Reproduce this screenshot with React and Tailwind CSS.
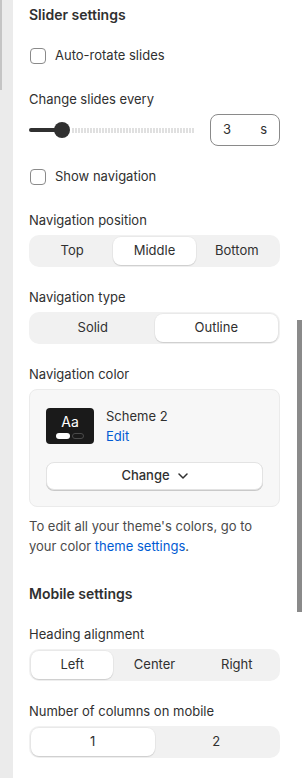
import clsx from 'clsx';

function Checkbox({ label }) {
  return (
    <div className="flex h-5 items-center gap-[9px]">
      <span className="h-4 w-4 rounded-[4px] border border-[#8a8a8a] bg-white" />
      <span className="text-[13px] text-[#303030]">{label}</span>
    </div>
  );
}

function Label({ children, className }) {
  return <div className={clsx("h-5 text-[13px] leading-5 text-[#303030]", className)}>{children}</div>;
}

function Segmented({ options, active }) {
  return (
    <div className="mt-[5px] flex h-8 rounded-[10px] bg-[#f1f1f1] p-[2px]">
      {options.map((o, i) => (
        <div
          key={o}
          className={clsx(
            "flex flex-1 items-center justify-center rounded-lg text-[13px] text-[#303030]",
            i === active && "bg-white shadow-[0_1px_1px_rgba(0,0,0,0.12),0_0_0_1px_rgba(0,0,0,0.03)]"
          )}
        >
          {o}
        </div>
      ))}
    </div>
  );
}

export default function App() {
  return (
    <div className="flex h-[778px] w-[302px] overflow-hidden bg-white font-[Inter,'Liberation_Sans',sans-serif] antialiased">
      {/* left rail */}
      <div className="w-[2px] bg-[#ebebeb]">
        <div className="h-[90px] bg-[#c4c4c4]" />
      </div>
      <div className="w-[11px] bg-[#ebebeb]" />

      {/* panel */}
      <div className="flex flex-1 flex-col pl-4 pr-[17px] pt-[5px]">
        <div className="h-5 text-[14px] font-semibold leading-5 text-[#303030]">Slider settings</div>

        <div className="mt-[21px] pl-px">
          <Checkbox label="Auto-rotate slides" />
        </div>

        <Label className="mt-[23px]">Change slides every</Label>
        <div className="mt-[5px] flex h-8 items-center">
          <div className="flex h-4 w-[165px] items-center">
            <div className="h-1 w-[29px] rounded-l-full bg-[#303030]" />
            <div className="-ml-1 h-4 w-4 shrink-0 rounded-full bg-[#303030]" />
            <div className="ml-[2px] h-[5px] flex-1 bg-[repeating-linear-gradient(90deg,#e0e0e0_0_2px,transparent_2px_3px)]" />
          </div>
          <div className="ml-auto flex h-8 w-[70px] items-center justify-between rounded-lg border border-[#8a8a8a] px-3 text-[13px] text-[#303030]">
            <span>3</span>
            <span>s</span>
          </div>
        </div>

        <div className="mt-[21px] pl-px">
          <Checkbox label="Show navigation" />
        </div>

        <Label className="mt-[23px]">Navigation position</Label>
        <Segmented options={['Top', 'Middle', 'Bottom']} active={1} />

        <Label className="mt-5">Navigation type</Label>
        <Segmented options={['Solid', 'Outline']} active={1} />

        <Label className="mt-5">Navigation color</Label>
        <div className="mt-[5px] rounded-lg border border-[#ebebeb] bg-[#f7f7f7] p-4">
          <div className="flex items-center gap-3">
            <div className="flex h-9 w-12 flex-col items-center justify-center rounded-[4px] bg-[#1a1a1a] pt-px">
              <span className="text-[14px] leading-4 text-white">Aa</span>
              <div className="mt-[3px] flex items-center gap-[2px]">
                <span className="h-[6px] w-[14px] rounded-full bg-white" />
                <span className="h-[6px] w-[12px] rounded-full border border-[#4a4a4a]" />
              </div>
            </div>
            <div className="flex flex-col text-[13px] leading-5">
              <span className="text-[#303030]">Scheme 2</span>
              <span className="text-[#005bd3]">Edit</span>
            </div>
          </div>
          <div className="mt-4 flex h-7 items-center justify-center gap-2 rounded-lg border border-[#e3e3e3] bg-white text-[13px] font-medium text-[#303030] shadow-[0_1px_0_#c9c9c9]">
            <span>Change</span>
            <svg width="10" height="6" viewBox="0 0 10 6" fill="none">
              <path d="M1 1l4 4 4-4" stroke="#303030" strokeWidth="1.5" strokeLinecap="round" strokeLinejoin="round" />
            </svg>
          </div>
        </div>

        <p className="mt-[9px] text-[13px] leading-5 text-[#4a4a4a]">
          To edit all your theme's colors, go to your color <span className="text-[#005bd3]">theme settings</span>.
        </p>

        <div className="mt-7 h-5 text-[14px] font-semibold leading-5 text-[#303030]">Mobile settings</div>

        <Label className="mt-5">Heading alignment</Label>
        <Segmented options={['Left', 'Center', 'Right']} active={0} />

        <Label className="mt-5">Number of columns on mobile</Label>
        <Segmented options={['1', '2']} active={0} />
      </div>

      {/* right scrollbar */}
      <div className="w-[5px]">
        <div className="mt-[320px] h-[292px] bg-[#8a8a8a]" />
      </div>
    </div>
  );
}
